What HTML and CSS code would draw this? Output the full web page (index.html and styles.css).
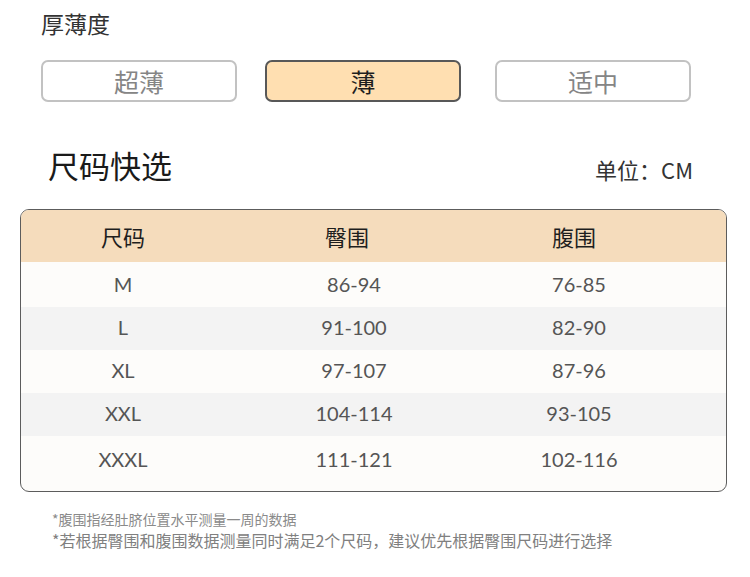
FILE: index.html
```html
<!DOCTYPE html>
<html lang="zh-CN">
<head>
<meta charset="utf-8">
<link rel="stylesheet" href="styles.css">
</head>
<body>
<div class="page">
  <div class="label">厚薄度</div>
  <div class="options">
    <div class="opt">超薄</div>
    <div class="opt opt-on">薄</div>
    <div class="opt opt-last">适中</div>
  </div>
  <div class="sec-head">
    <div class="sec-title">尺码快选</div>
    <div class="unit">单位：CM</div>
  </div>
  <div class="table">
    <div class="thead">
      <div class="th">尺码</div>
      <div class="th th2">臀围</div>
      <div class="th th3">腹围</div>
    </div>
    <div class="tbody">
      <div class="tr"><div class="td">M</div><div class="td">86-94</div><div class="td">76-85</div></div>
      <div class="tr tr-alt"><div class="td">L</div><div class="td">91-100</div><div class="td">82-90</div></div>
      <div class="tr"><div class="td">XL</div><div class="td">97-107</div><div class="td">87-96</div></div>
      <div class="tr tr-alt"><div class="td">XXL</div><div class="td">104-114</div><div class="td">93-105</div></div>
      <div class="tr tr-last"><div class="td">XXXL</div><div class="td">111-121</div><div class="td">102-116</div></div>
    </div>
  </div>
  <div class="notes">
    <div class="note1">*腹围指经肚脐位置水平测量一周的数据</div>
    <div class="note2">*若根据臀围和腹围数据测量同时满足2个尺码，建议优先根据臀围尺码进行选择</div>
  </div>
</div>
</body>
</html>
```
FILE: styles.css
```css
html, body {
  margin: 0;
  padding: 0;
  background: #ffffff;
}
body {
  font-family: "Noto Sans CJK SC", "Noto Sans", sans-serif;
  color: #222;
}
.page {
  width: 750px;
  height: 577px;
  overflow: hidden;
}
.label {
  margin: 8px 0 0 41px;
  font-size: 23px;
  line-height: 30px;
  color: #333;
}
.options {
  display: flex;
  gap: 28px;
  margin: 22px 0 0 41px;
}
.opt {
  box-sizing: border-box;
  width: 196px;
  height: 42px;
  border: 2px solid #c2c2c2;
  border-radius: 7px;
  display: flex;
  align-items: center;
  justify-content: center;
  font-size: 25px;
  color: #858585;
  background: #fff;
}
.opt-on {
  background: #ffdfb1;
  border-color: #585858;
  color: #1e1e1e;
}
.opt-last {
  margin-left: 6px;
}
.sec-head {
  display: flex;
  justify-content: space-between;
  align-items: flex-end;
  margin: 45px 57px 0 48px;
  height: 40px;
}
.sec-title {
  font-size: 31px;
  line-height: 40px;
  color: #1a1a1a;
  padding-bottom: 2px;
}
.unit {
  font-size: 22px;
  line-height: 30px;
  color: #333;
  padding-bottom: 3px;
}
.table {
  margin: 22px 0 0 20px;
  width: 707px;
  box-sizing: border-box;
  border: 1.5px solid #5c5c5c;
  border-radius: 9px;
  overflow: hidden;
  background: #fdfcfa;
}
.thead, .tr {
  display: grid;
  grid-template-columns: 204px 258px 192px;
}
.thead {
  background: #f5dcbc;
  height: 52px;
  align-items: center;
}
.th {
  text-align: center;
  font-size: 22px;
  color: #1e1e1e;
}
.th2 {
  padding-right: 14px;
}
.th3 {
  padding-right: 10px;
}
.tbody {
  padding: 2px 0 4px;
}
.tr {
  height: 43px;
  align-items: center;
}
.tr-alt {
  background: #f3f3f3;
}
.tr-last {
  height: 51px;
}
.td {
  text-align: center;
  font-family: "Lato", "Noto Sans", sans-serif;
  font-size: 20px;
  color: #555;
  padding-bottom: 3px;
}
.tr-last .td {
  padding-bottom: 6px;
}
.notes {
  margin: 17px 0 0 52px;
  color: #8a8a8a;
}
.note1 {
  font-size: 14px;
  line-height: 20px;
}
.note2 {
  font-size: 16px;
  line-height: 22px;
  color: #808080;
}
```
